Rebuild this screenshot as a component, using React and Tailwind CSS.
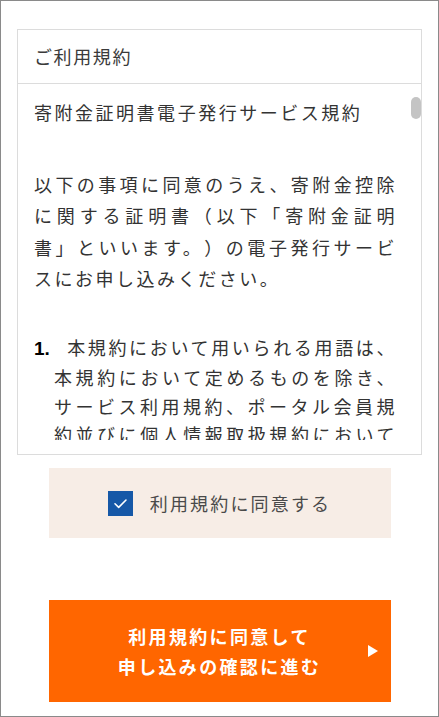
import { useState } from "react";

const jp = { fontFamily: '"Noto Sans CJK JP", "Noto Sans", sans-serif' };

function Terms() {
  return (
    <div className="mx-4 mt-[28px] border border-[#dcdcdc] pb-[14px]">
      <div className="flex h-[54px] items-center border-b border-[#dcdcdc] pl-4 text-[18px] tracking-[0.09em] text-[#3a3a3a]">
        ご利用規約
      </div>
      <div className="relative">
        <div className="h-[356px] overflow-y-scroll pl-4 pr-6 pt-[13px] text-[18px] tracking-[0.14em] text-[#333] [scrollbar-width:none] [text-spacing-trim:space-all]">
          <p className="mb-[40px] text-justify leading-[1.75]">寄附金証明書電子発行サービス規約</p>
          <p className="mb-[38px] text-justify leading-[1.75]">
            以下の事項に同意のうえ、寄附金控除に関する証明書（以下「寄附金証明書」といいます。）の電子発行サービスにお申し込みください。
          </p>
          <ol>
            <li className="mb-6 pl-5 -indent-5 text-justify leading-[28.5px]">
              <span className="inline-block w-[33px] indent-0 text-[19px] font-bold tracking-normal text-black" style={{ fontFamily: '"Liberation Sans", sans-serif' }}>
                1.
              </span>
              本規約において用いられる用語は、本規約において定めるものを除き、サービス利用規約、ポータル会員規約並びに個人情報取扱規約において定めるところによるものとします。
            </li>
            <li className="mb-6 pl-5 -indent-5 text-justify leading-[28.5px]">
              <span className="inline-block w-[33px] indent-0 text-[19px] font-bold tracking-normal text-black" style={{ fontFamily: '"Liberation Sans", sans-serif' }}>
                2.
              </span>
              寄附金証明書の電子発行は、本サービスを通じて寄附を行った会員に限り利用できるものとします。
            </li>
          </ol>
        </div>
        <div className="absolute right-0 top-[13px] h-[22px] w-[10px] rounded-full bg-[#c4c4c4]" />
      </div>
    </div>
  );
}

function Agree({ checked, onToggle }) {
  return (
    <label className="mx-auto mt-[13px] flex h-[70px] w-[342px] cursor-pointer items-center justify-center gap-[17px] bg-[#f7ede6]">
      <span
        onClick={onToggle}
        className={`flex h-[25px] w-[25px] items-center justify-center ${checked ? "bg-[#1658a7]" : "border border-[#999] bg-white"}`}
      >
        {checked && (
          <svg width="25" height="25" viewBox="0 0 25 25" fill="none">
            <path d="M7 12.8l3.7 3.6L18 9" stroke="white" strokeWidth="1.6" strokeLinecap="round" strokeLinejoin="round" />
          </svg>
        )}
      </span>
      <span className="text-[18px] tracking-[0.12em] text-[#4a4a4a]">利用規約に同意する</span>
    </label>
  );
}

export default function App() {
  const [checked, setChecked] = useState(true);

  return (
    <div className="h-[717px] w-[439px] overflow-hidden border border-[#8a8a8a] bg-white" style={jp}>
      <Terms />
      <Agree checked={checked} onToggle={() => setChecked(!checked)} />
      <button className="relative mx-auto mt-[62px] flex h-[102px] w-[342px] items-center justify-center bg-[#ff6600] text-[18px] font-bold leading-[30px] tracking-[0.13em] text-white">
        <span>
          利用規約に同意して
          <br />
          申し込みの確認に進む
        </span>
        <svg className="absolute right-[13px] top-1/2 -translate-y-1/2" width="10" height="12" viewBox="0 0 10 12">
          <path d="M0 0L10 6L0 12Z" fill="white" />
        </svg>
      </button>
    </div>
  );
}
